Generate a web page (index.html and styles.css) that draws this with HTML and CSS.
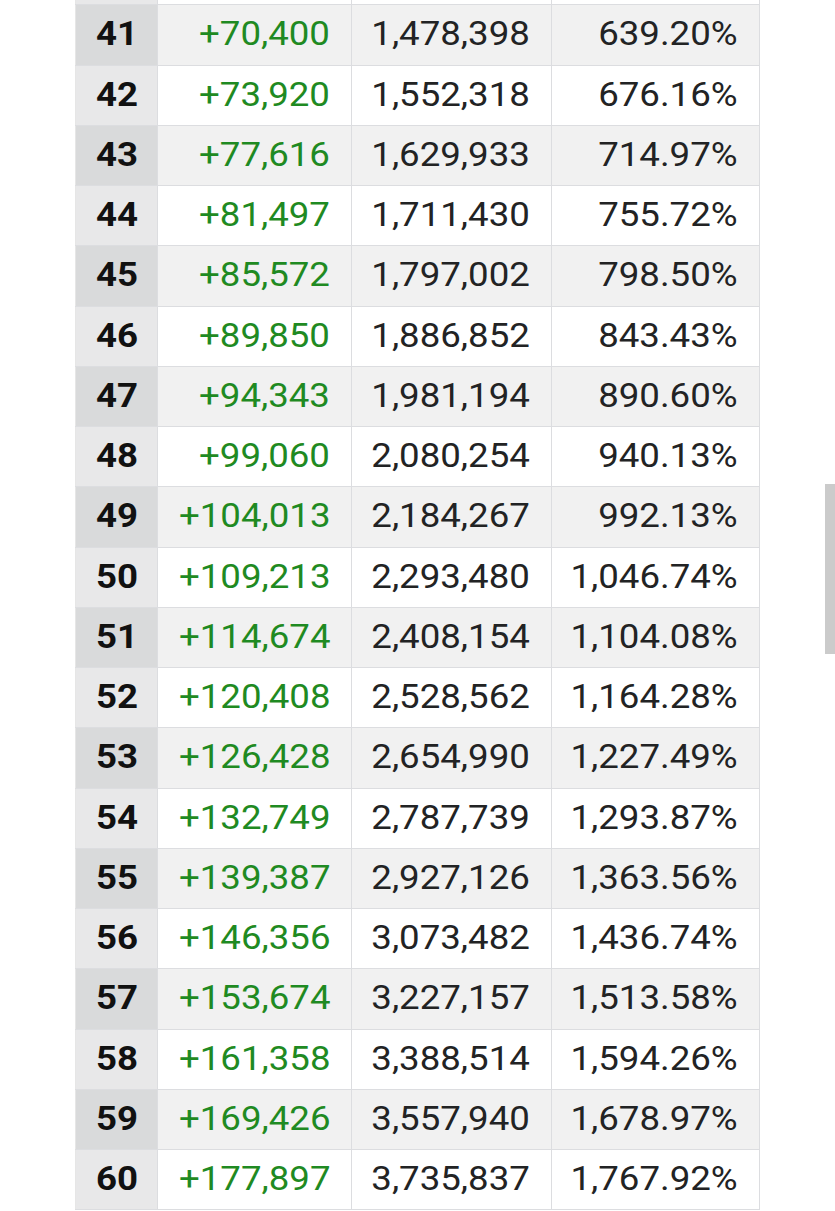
FILE: index.html
```html
<!DOCTYPE html>
<html>
<head>
<meta charset="utf-8">
<link rel="stylesheet" href="styles.css">
</head>
<body>
<div class="page">
<table class="growth">
<tbody>
<tr class="lead"><th></th><td></td><td></td><td></td></tr>
<tr><th><span>41</span></th><td class="up"><span>+70,400</span></td><td><span>1,478,398</span></td><td><span>639.20%</span></td></tr>
<tr><th><span>42</span></th><td class="up"><span>+73,920</span></td><td><span>1,552,318</span></td><td><span>676.16%</span></td></tr>
<tr><th><span>43</span></th><td class="up"><span>+77,616</span></td><td><span>1,629,933</span></td><td><span>714.97%</span></td></tr>
<tr><th><span>44</span></th><td class="up"><span>+81,497</span></td><td><span>1,711,430</span></td><td><span>755.72%</span></td></tr>
<tr><th><span>45</span></th><td class="up"><span>+85,572</span></td><td><span>1,797,002</span></td><td><span>798.50%</span></td></tr>
<tr><th><span>46</span></th><td class="up"><span>+89,850</span></td><td><span>1,886,852</span></td><td><span>843.43%</span></td></tr>
<tr><th><span>47</span></th><td class="up"><span>+94,343</span></td><td><span>1,981,194</span></td><td><span>890.60%</span></td></tr>
<tr><th><span>48</span></th><td class="up"><span>+99,060</span></td><td><span>2,080,254</span></td><td><span>940.13%</span></td></tr>
<tr><th><span>49</span></th><td class="up"><span>+104,013</span></td><td><span>2,184,267</span></td><td><span>992.13%</span></td></tr>
<tr><th><span>50</span></th><td class="up"><span>+109,213</span></td><td><span>2,293,480</span></td><td><span>1,046.74%</span></td></tr>
<tr><th><span>51</span></th><td class="up"><span>+114,674</span></td><td><span>2,408,154</span></td><td><span>1,104.08%</span></td></tr>
<tr><th><span>52</span></th><td class="up"><span>+120,408</span></td><td><span>2,528,562</span></td><td><span>1,164.28%</span></td></tr>
<tr><th><span>53</span></th><td class="up"><span>+126,428</span></td><td><span>2,654,990</span></td><td><span>1,227.49%</span></td></tr>
<tr><th><span>54</span></th><td class="up"><span>+132,749</span></td><td><span>2,787,739</span></td><td><span>1,293.87%</span></td></tr>
<tr><th><span>55</span></th><td class="up"><span>+139,387</span></td><td><span>2,927,126</span></td><td><span>1,363.56%</span></td></tr>
<tr><th><span>56</span></th><td class="up"><span>+146,356</span></td><td><span>3,073,482</span></td><td><span>1,436.74%</span></td></tr>
<tr><th><span>57</span></th><td class="up"><span>+153,674</span></td><td><span>3,227,157</span></td><td><span>1,513.58%</span></td></tr>
<tr><th><span>58</span></th><td class="up"><span>+161,358</span></td><td><span>3,388,514</span></td><td><span>1,594.26%</span></td></tr>
<tr><th><span>59</span></th><td class="up"><span>+169,426</span></td><td><span>3,557,940</span></td><td><span>1,678.97%</span></td></tr>
<tr><th><span>60</span></th><td class="up"><span>+177,897</span></td><td><span>3,735,837</span></td><td><span>1,767.92%</span></td></tr>
</tbody>
</table>
</div>
<div class="scrollbar"></div>
</body>
</html>
```

FILE: styles.css
```css
html, body {
  margin: 0;
  padding: 0;
  background: #ffffff;
}
body {
  font-family: Roboto, "Liberation Sans", sans-serif;
  color: #222324;
  overflow: hidden;
}
.page {
  padding-left: 75px;
}
.growth {
  border-collapse: collapse;
  margin-top: -56px;
  font-size: 33px;
}
.growth tr {
  height: 60.25px;
}
.growth th,
.growth td {
  border: 1px solid #dcdde0;
  padding: 0 21px 2px 0;
  text-align: right;
  vertical-align: middle;
  white-space: nowrap;
  line-height: 1;
}
.growth span {
  display: inline-block;
  transform: scaleX(1.11);
  transform-origin: right center;
}
.growth th span {
  transform-origin: center center;
}
.growth th {
  width: 81px;
  padding: 0 0 2px 0;
  text-align: center;
  font-weight: 700;
  color: #111111;
  background: #e8e8e9;
  border-left-color: #e6e6e6;
}
.growth td:nth-child(2) { width: 172px; }
.growth td:nth-child(3) { width: 178px; }
.growth td:nth-child(4) { width: 186px; }
.growth tr:nth-child(even) td { background: #f1f1f1; }
.growth tr:nth-child(even) th { background: #d9dadb; }
.growth .up { color: #1f8a22; }
.scrollbar {
  position: fixed;
  right: 0;
  top: 484px;
  width: 10px;
  height: 170px;
  background: #cbcbcb;
}
```
